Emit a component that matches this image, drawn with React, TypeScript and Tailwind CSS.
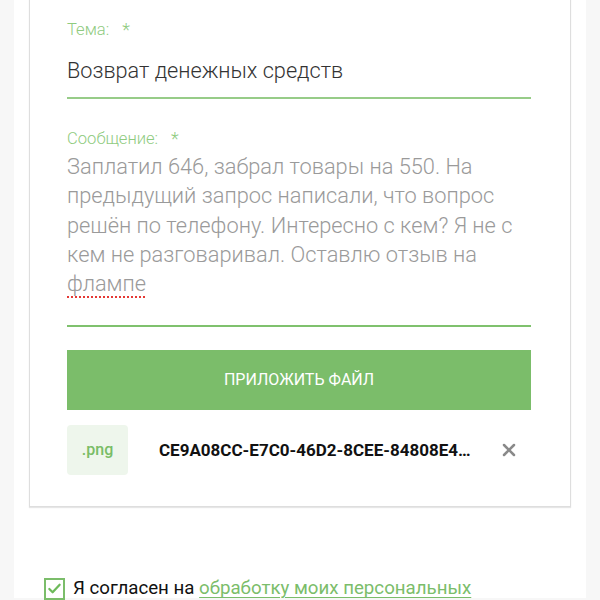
import { X } from 'lucide-react'

const font = { fontFamily: 'Roboto, "Liberation Sans", sans-serif' }

function Field({ label, children, className = '' }: { label: string; children: React.ReactNode; className?: string }) {
  return (
    <div className={className}>
      <div className="flex items-center gap-[13px] text-[16.6px] font-light leading-[20px] text-[#8fcb7f]">
        <span>{label}</span>
        <span className="text-[18px]">*</span>
      </div>
      {children}
    </div>
  )
}

export default function App() {
  return (
    <div className="h-[600px] w-[600px] overflow-hidden bg-[#f7f7f7]" style={font}>
      <div className="mx-[14px] h-full bg-white pl-[15px] pr-[15px]">
        <div className="-mt-[2px] border border-t-0 border-[#dedede] bg-white pb-[31px] pl-[37px] pr-[39px] pt-[22px] shadow-[0_1px_1px_#e6e6e6]">
          <Field label="Тема:">
            <div className="mt-[19px] text-[21.7px] font-light leading-[24px] text-[#333]">Возврат денежных средств</div>
            <div className="mt-[14px] h-[2px] bg-[#97cc88]" />
          </Field>

          <Field label="Сообщение:" className="mt-[30px]">
            <div className="mt-[3px] text-[21.8px] font-light leading-[29.3px] text-[#9a9a9a]">
              Заплатил 646, забрал товары на 550. На предыдущий запрос написали, что вопрос решён по телефону. Интересно с кем? Я не с кем не разговаривал. Оставлю отзыв на{' '}
              <span className="underline decoration-dotted decoration-[#e53935] decoration-2 underline-offset-[5px]">флампе</span>
            </div>
            <div className="mt-[27px] h-[2px] bg-[#7fc16d]" />
          </Field>

          <button className="mt-[23px] flex h-[60px] w-full items-center justify-center bg-[#7bbd6a] text-[16px] font-normal text-white">
            ПРИЛОЖИТЬ ФАЙЛ
          </button>

          <div className="mt-[15px] flex items-center">
            <div className="flex h-[50px] w-[61px] items-center justify-center rounded-[4px] bg-[#eef6ec] text-[16px] font-medium text-[#79bd67]">
              .png
            </div>
            <div className="ml-[31px] w-[318px] truncate text-[17px] font-bold text-[#111]">
              CE9A08CC-E7C0-46D2-8CEE-84808E4FB1A2.png
            </div>
            <X className="ml-auto mr-[12px] h-[20px] w-[20px] text-[#8a8a8a]" strokeWidth={3} />
          </div>
        </div>

        <div className="mt-[67px] flex items-center pl-[15px]">
          <div className="flex h-[22px] w-[21px] items-center justify-center border-2 border-[#7bbd6a]">
            <svg viewBox="0 0 16 16" className="h-[15px] w-[15px]" fill="none" stroke="#6dba5a" strokeWidth="2.4" strokeLinecap="round" strokeLinejoin="round">
              <path d="M2.5 8.5l3.5 3.5 7.5-8" />
            </svg>
          </div>
          <span className="ml-[8px] text-[18.7px] text-[#111]">
            Я согласен на{' '}
            <span className="text-[#7bbd6a] underline underline-offset-[3px]">обработку моих персональных</span>
          </span>
        </div>
      </div>
    </div>
  )
}
